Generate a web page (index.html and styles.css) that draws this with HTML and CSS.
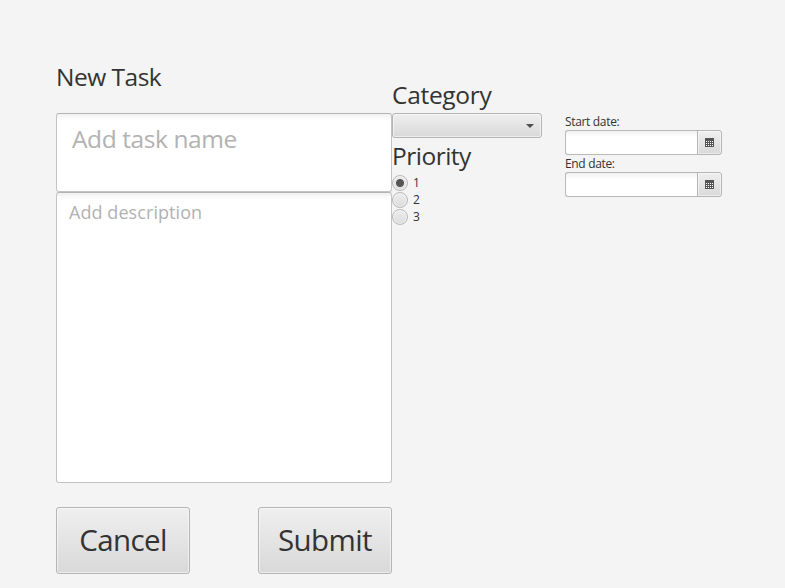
FILE: index.html
```html
<!DOCTYPE html>
<html lang="en">
<head>
<meta charset="utf-8">
<title>New Task</title>
<link rel="stylesheet" href="styles.css">
</head>
<body>
<main class="page">
  <section class="task">
    <h1 class="heading heading-task">New Task</h1>
    <div class="field name">Add task name</div>
    <div class="field description">Add description</div>
    <div class="actions">
      <button class="raised action">Cancel</button>
      <button class="raised action">Submit</button>
    </div>
  </section>
  <section class="options">
    <h2 class="heading heading-category">Category</h2>
    <div class="raised combo"><svg width="8" height="4" viewBox="0 0 8 4"><path d="M0 0h8L4 4z" fill="#4d4d4d"/></svg></div>
    <h2 class="heading heading-priority">Priority</h2>
    <div class="radio"><i class="dot selected"></i><span>1</span></div>
    <div class="radio"><i class="dot"></i><span>2</span></div>
    <div class="radio"><i class="dot"></i><span>3</span></div>
  </section>
  <section class="dates">
    <div class="label">Start date:</div>
    <div class="picker">
      <div class="entry"></div>
      <div class="raised calendar"><svg width="9" height="9" viewBox="0 0 9 9" shape-rendering="crispEdges"><path d="M0 0h9v9H0z" fill="#545454"/><path d="M1 3.5h7M1 5.5h7M1 7.5h7" stroke="#fff" stroke-dasharray="1 1"/></svg></div>
    </div>
    <div class="label">End date:</div>
    <div class="picker">
      <div class="entry"></div>
      <div class="raised calendar"><svg width="9" height="9" viewBox="0 0 9 9" shape-rendering="crispEdges"><path d="M0 0h9v9H0z" fill="#545454"/><path d="M1 3.5h7M1 5.5h7M1 7.5h7" stroke="#fff" stroke-dasharray="1 1"/></svg></div>
    </div>
  </section>
</main>
</body>
</html>
```
FILE: styles.css
```css
* { box-sizing: border-box; }
body {
  margin: 0;
  height: 588px;
  overflow: hidden;
  background: #f4f4f4;
  color: #333;
  font: 12px/16px "Open Sans", "Noto Sans", sans-serif;
}
.page { display: flex; align-items: flex-start; padding-left: 56px; }
.task { width: 336px; padding-top: 61px; }
.options { width: 150px; padding-top: 79px; }
.dates { width: 157px; margin-left: 23px; padding-top: 114px; }
.heading { margin: 0; font-size: 24.5px; font-weight: 400; line-height: 32px; letter-spacing: -.5px; white-space: nowrap; }
.heading-task { margin-bottom: 20px; }
.options .heading { height: 34px; }
.options .heading-category { letter-spacing: -.3px; }
.options .heading-priority { height: 36px; line-height: 36px; }
.field {
  background: linear-gradient(#f0f0f0, #fff 6px);
  border: 1px solid #c4c4c4;
  border-top-color: #b5b5b5;
  border-radius: 3px;
  color: #b2b2b2;
  white-space: nowrap;
}
.name { height: 79px; padding: 9px 15px; font-size: 24.5px; line-height: 32px; letter-spacing: -.4px; }
.description { height: 291px; padding: 7px 12px; font-size: 18px; line-height: 24px; letter-spacing: .07px; }
.actions { display: flex; justify-content: space-between; margin-top: 24px; }
.raised {
  border: 1px solid #b5b5b5;
  border-radius: 3px;
  background: linear-gradient(#efefef, #d9d9d9);
  box-shadow: inset 0 0 0 1px rgba(255, 255, 255, .5);
}
.action {
  width: 134px;
  height: 67px;
  padding: 0 0 2px;
  color: #333;
  font: 29.5px/63px "Open Sans", "Noto Sans", sans-serif;
  letter-spacing: -.6px;
}
.combo { display: flex; align-items: center; justify-content: flex-end; height: 25px; padding-right: 7px; }
.radio { display: flex; align-items: center; gap: 5px; height: 17px; }
.dot {
  width: 16px;
  height: 16px;
  border: 1px solid #b9b9b9;
  border-radius: 50%;
  background: linear-gradient(#ededed, #dcdcdc);
  box-shadow: inset 0 0 0 1px rgba(255, 255, 255, .45);
}
.selected { background: radial-gradient(circle, #555 3.5px, transparent 4.5px), linear-gradient(#ededed, #dcdcdc); }
.label { height: 16px; letter-spacing: -.33px; white-space: nowrap; }
.picker { display: flex; height: 25px; margin-bottom: 1px; }
.entry {
  width: 133px;
  border: 1px solid #b9b9b9;
  border-right: 0;
  border-radius: 3px 0 0 3px;
  background: linear-gradient(#f0f0f0, #fff 6px);
}
.calendar { display: flex; flex: none; align-items: center; justify-content: center; width: 25px; margin-left: -1px; border-radius: 0 3px 3px 0; }
```
